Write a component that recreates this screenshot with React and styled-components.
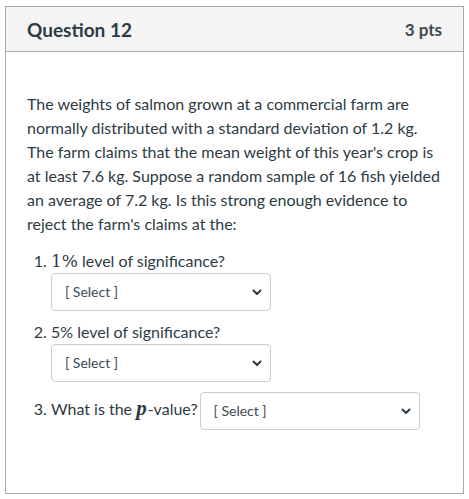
import React from 'react';
import styled, { createGlobalStyle } from 'styled-components';

const GlobalStyle = createGlobalStyle`
  body {
    margin: 0;
    background: #fff;
    font-family: Lato, "Open Sans", sans-serif;
    color: #2d3b45;
  }
`;

const Card = styled.div`
  margin: 6px 0 0 5px;
  width: 459px;
  height: 488px;
  box-sizing: border-box;
  border: 1px solid #aaaaaa;
  display: flex;
  flex-direction: column;
`;

const Header = styled.div`
  height: 44px;
  flex-shrink: 0;
  background: #f4f4f4;
  border-bottom: 1px solid #aaaaaa;
  display: flex;
  align-items: center;
  justify-content: space-between;
  padding: 0 21px;
`;

const Title = styled.h2`
  margin: 0;
  font-size: 19px;
  font-weight: 700;
`;

const Points = styled.span`
  font-size: 17px;
  font-weight: 700;
  color: #3d4a53;
`;

const Body = styled.div`
  padding: 40px 21px 0;
  font-size: 16px;
  line-height: 24px;
`;

const Text = styled.p`
  margin: 0 0 13px;
`;

const List = styled.ol`
  margin: 0;
  padding-left: 24px;
`;

const Item = styled.li`
  margin-bottom: ${({ $gap }) => $gap}px;
`;

const Math = styled.span`
  font-family: ${({ $italic }) => ($italic ? '"Liberation Serif"' : '"DejaVu Serif"')}, serif;
  font-size: ${({ $italic }) => ($italic ? 21 : 17)}px;
  font-style: ${({ $italic }) => ($italic ? 'italic' : 'normal')};
  font-weight: ${({ $italic }) => ($italic ? 700 : 400)};
  line-height: 0;
  margin-right: ${({ $italic }) => ($italic ? 1 : 0)}px;
`;

const SelectBox = styled.div`
  display: ${({ $inline }) => ($inline ? 'inline-flex' : 'flex')};
  vertical-align: middle;
  align-items: center;
  justify-content: space-between;
  box-sizing: border-box;
  width: 220px;
  height: 38px;
  margin: ${({ $inline }) => ($inline ? '0 0 0 2px' : '0')};
  padding: 0 8px 0 13px;
  border: 1px solid #c7cdd1;
  border-radius: 4px;
  background: #fff;
  font-size: 14px;
  color: #3b4a55;
`;

const Chevron = () => (
  <svg width="10" height="7" viewBox="0 0 10 7">
    <path d="M1.5 1.5 L5 5 L8.5 1.5" fill="none" stroke="#2d3b45" strokeWidth="2" strokeLinecap="round" strokeLinejoin="round" />
  </svg>
);

const Select = ({ inline }) => (
  <SelectBox $inline={inline}>
    <span>[ Select ]</span>
    <Chevron />
  </SelectBox>
);

export default function App() {
  return (
    <>
      <GlobalStyle />
      <Card>
        <Header>
          <Title>Question 12</Title>
          <Points>3 pts</Points>
        </Header>
        <Body>
          <Text>
            The weights of salmon grown at a commercial farm are normally distributed with a standard
            deviation of 1.2 kg. The farm claims that the mean weight of this year's crop is at least
            7.6 kg. Suppose a random sample of 16 fish yielded an average of 7.2 kg. Is this strong
            enough evidence to reject the farm's claims at the:
          </Text>
          <List>
            <Item $gap={9}>
              <Math>1%</Math> level of significance?
              <Select />
            </Item>
            <Item $gap={10}>
              5% level of significance?
              <Select />
            </Item>
            <Item $gap={0}>
              What is the <Math $italic>p</Math>-value?
              <Select inline />
            </Item>
          </List>
        </Body>
      </Card>
    </>
  );
}
